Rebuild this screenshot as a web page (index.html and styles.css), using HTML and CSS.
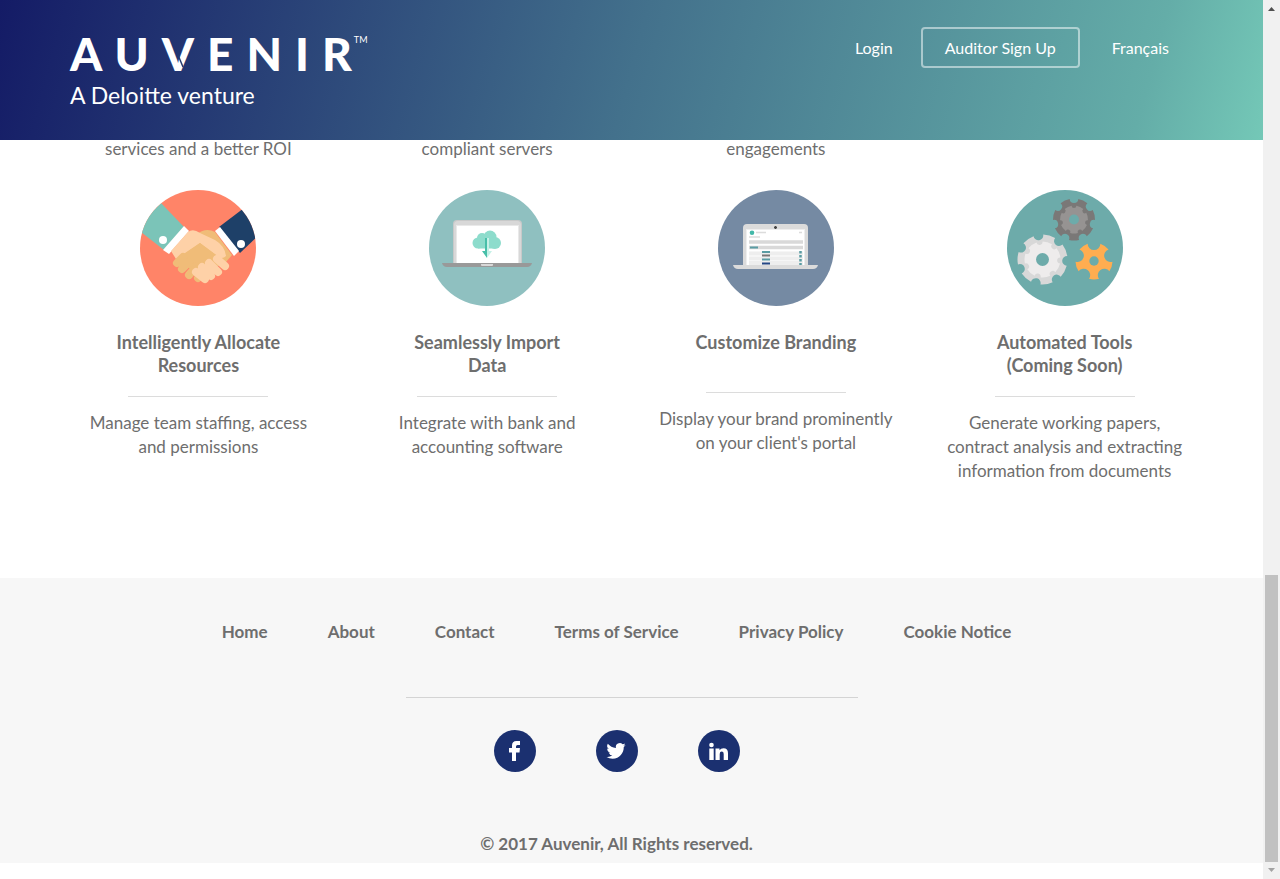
FILE: index.html
```html
<!DOCTYPE html>
<html lang="en">
<head>
<meta charset="utf-8">
<title>Auvenir</title>
<link rel="stylesheet" href="styles.css">
</head>
<body>
<div class="page">
  <header class="header">
    <a class="brand" href="#">
      <span class="wordmark"><span class="letters">AUVENI<span class="last">R</span></span><sup class="tm">TM</sup></span>
      <svg class="cuts" viewBox="0 0 140 54" aria-hidden="true"><path d="M108 28 113 40" stroke="#23396f" stroke-width="1.5"/></svg>
      <span class="tagline">A Deloitte venture</span>
    </a>
    <nav class="account">
      <a class="account-link" href="#">Login</a>
      <button class="signup" type="button">Auditor Sign Up</button>
      <a class="account-link" href="#">Français</a>
    </nav>
  </header>

  <main class="features">
    <p class="text">services and a better ROI</p>
    <p class="text">compliant servers</p>
    <p class="text">engagements</p>
    <p class="text"></p>

    <article class="feature">
      <svg class="art" viewBox="0 0 116 116" aria-hidden="true">
        <defs><clipPath id="disc"><circle cx="58" cy="58" r="58"/></clipPath></defs>
        <g clip-path="url(#disc)">
          <rect width="116" height="116" fill="#ff8468"/>
          <path d="M-4 38 21 13 44 37 24 60Z" fill="#7bc4b8"/>
          <path d="M79 37 104 18 122 42 100 63Z" fill="#1e4068"/>
          <path d="M44 36 49 41 29 64 23 60Z" fill="#fff"/>
          <path d="M75 41 80 37 99 61 94 66Z" fill="#fff"/>
          <circle cx="23" cy="50" r="4" fill="#fff"/><circle cx="101" cy="54" r="4" fill="#fff"/>
          <path d="M57 44Q66 37 75 42L92 65 86 72 62 84 40 68Z" fill="#f0bc78"/>
          <path d="M48 42Q53 38 60 43L75 50Q85 56 86 66 82 70 77 66L60 53 36 69 31 61Z" fill="#fed1a7"/>
          <path d="M60 53 79 67 60 86 37 69Z" fill="#f0bc78"/>
          <g stroke="#f0bc78" stroke-width="8" stroke-linecap="round"><path d="M37 73 43 67M42 79 49 72M49 85 56 77M58 88 64 81"/></g>
          <g stroke="#fed1a7" stroke-width="8" stroke-linecap="round"><path d="M77 69 85 76M69 73 78 82M62 77 71 86M56 82 65 89"/></g>
        </g>
      </svg>
      <h2 class="title">Intelligently Allocate Resources</h2>
      <hr class="rule">
      <p class="text">Manage team staffing, access and permissions</p>
    </article>

    <article class="feature">
      <svg class="art" viewBox="0 0 116 116" aria-hidden="true">
        <circle cx="58" cy="58" r="58" fill="#8fc0c0"/>
        <path d="M24 74V34q0-4 4-4h61q4 0 4 4v40z" fill="#c8c9c9"/>
        <path d="M25 74V35q0-4 4-4h59q4 0 4 4v39z" fill="#d8d8d8"/>
        <rect x="27" y="35" width="63" height="39" fill="#e9e9e9"/><rect x="28" y="36" width="61" height="38" fill="#fff"/>
        <g fill="#8ddccc"><circle cx="49" cy="53" r="5.5"/><circle cx="53" cy="48" r="5"/><circle cx="61" cy="47" r="6.5"/><circle cx="66" cy="53" r="6"/><rect x="49" y="49" width="17" height="9.5"/></g>
        <path d="M56 48h2v20l-5-7h3z" fill="#47bfa9"/><path d="M58 48h2v13h3l-5 7z" fill="#c5f1e7"/>
        <path d="M13 73h90q-1 4-5 4H18q-4 0-5-4z" fill="#999"/><path d="M52 74h12v1q0 1-1 1H53q-1 0-1-1z" fill="#d8d8d8"/>
      </svg>
      <h2 class="title">Seamlessly Import Data</h2>
      <hr class="rule">
      <p class="text">Integrate with bank and accounting software</p>
    </article>

    <article class="feature">
      <svg class="art" viewBox="0 0 116 116" aria-hidden="true">
        <circle cx="58" cy="58" r="58" fill="#758aa3"/>
        <path d="M25 75V38q0-4 4-4h57q4 0 4 4v37z" fill="#dbdbdb"/><path d="M28 75V39h59v36z" fill="#eee"/>
        <rect x="29" y="40" width="57" height="35" fill="#fff"/><path d="M56 37.500h3M57.500 36v3" stroke="#444" stroke-width="1.500"/>
        <circle cx="34" cy="42.700" r="2.300" fill="#42b8a8"/><path d="M38 42.500h10M31 47h11M81 42.500h3" stroke="#dcdcdc" stroke-width="1.500"/>
        <path d="M31 52h54M31 57.500h54" stroke="#d9d9d9" stroke-width="3.500"/><path d="M31 63.500h54M31 68.500h54M31 73h54" stroke="#eee" stroke-width="4"/>
        <path d="M32 57.500h8M44 62h8M44 69.500h8" stroke="#5a9ca3" stroke-width="2"/><path d="M44 65.500h8" stroke="#777" stroke-width="2"/><path d="M44 73.500h8" stroke="#244785" stroke-width="2"/>
        <path d="M82.500 61v14" stroke="#5a9ca3" stroke-width="2.500" stroke-dasharray="2.500 1.500"/>
        <path d="M15 75h85q-1 4-5 4H20q-4 0-5-4z" fill="#dbdbdb"/>
      </svg>
      <h2 class="title">Customize Branding</h2>
      <hr class="rule">
      <p class="text">Display your brand prominently on your client's portal</p>
    </article>

    <article class="feature">
      <svg class="art" viewBox="0 0 116 116" aria-hidden="true">
        <circle cx="58" cy="58" r="58" fill="#6dabaa"/>
        <g id="gears"></g>
      </svg>
      <h2 class="title">Automated Tools (Coming Soon)</h2>
      <hr class="rule">
      <p class="text">Generate working papers, contract analysis and extracting information from documents</p>
    </article>
  </main>

  <footer class="footer">
    <nav class="links">
      <a href="#">Home</a><a href="#">About</a><a href="#">Contact</a><a href="#">Terms of Service</a><a href="#">Privacy Policy</a><a href="#">Cookie Notice</a>
    </nav>
    <hr class="footer-rule">
    <div class="social">
      <a href="#" aria-label="Facebook"><svg viewBox="0 0 42 42"><circle cx="21" cy="21" r="21" fill="#1b3070"/><path d="M18 31V22.500h-3V18h3v-2.500q0-4.500 4.500-4.500H26v4h-2.500q-1.500 0-1.500 1.500V18h4l-.5 4.500H22V31z" fill="#fff"/></svg></a>
      <a href="#" aria-label="Twitter"><svg viewBox="0 0 42 42"><circle cx="21" cy="21" r="21" fill="#1b3070"/><path transform="translate(10.500 11.300) scale(.8)" d="M23.950 4.570a10 10 0 0 1-2.820.77 4.960 4.960 0 0 0 2.160-2.720c-.95.560-2 .96-3.130 1.180a4.920 4.920 0 0 0-8.380 4.480C7.690 8.100 4.070 6.130 1.640 3.160a4.920 4.920 0 0 0 1.520 6.570 4.900 4.900 0 0 1-2.230-.61v.06a4.920 4.920 0 0 0 3.950 4.830 5 5 0 0 1-2.210.08 4.940 4.940 0 0 0 4.600 3.420A9.870 9.870 0 0 1 0 19.540a14 14 0 0 0 7.550 2.210c9.050 0 14-7.500 14-13.980 0-.21 0-.42-.02-.63a9.940 9.940 0 0 0 2.420-2.570z" fill="#fff"/></svg></a>
      <a href="#" aria-label="LinkedIn"><svg viewBox="0 0 42 42"><circle cx="21" cy="21" r="21" fill="#1b3070"/><circle cx="13.500" cy="15" r="2.300" fill="#fff"/><path d="M11.300 18.500h4.400V30h-4.400zM17.500 18.500h4v1.700q1.300-2 4-2 4.500 0 4.500 5V30h-4.300v-6q0-2.400-2-2.400t-2 2.400v6h-4.200z" fill="#fff"/></svg></a>
    </div>
    <p class="copyright">© 2017 Auvenir, All Rights reserved.</p>
  </footer>
</div>
<div class="scrollbar" aria-hidden="true">
  <svg class="arrow" viewBox="0 0 17 17"><path d="M5 11h7L8.500 7z" fill="#505050"/></svg>
  <div class="track"><div class="thumb"></div></div>
  <svg class="arrow" viewBox="0 0 17 17"><path d="M5 6h7l-3.500 4z" fill="#a3a3a3"/></svg>
</div>
<script src="gears.js"></script>
</body>
</html>
```
FILE: gears.js
```js
const host = document.getElementById('gears');

// Builds a gear outline: arc-topped teeth with round notches between them.
// "share" is the part of each step that the tooth takes.
function gear(cx, cy, outer, teeth, share, turn, fill) {
  let d = '';
  const step = 2 * Math.PI / teeth;
  const half = step * share / 2;
  const notch = outer * Math.sin((step - 2 * half) / 2);
  const at = (a) => (cx + outer * Math.cos(a)).toFixed(2) + ' ' + (cy + outer * Math.sin(a)).toFixed(2);
  for (let i = 0; i < teeth; i++) {
    const a = turn * Math.PI / 180 + i * step;
    d += (i ? '' : 'M' + at(a - half));
    d += 'A' + outer + ' ' + outer + ' 0 0 1 ' + at(a + half);
    d += 'A' + notch + ' ' + notch + ' 0 0 0 ' + at(a + step - half);
  }
  const path = document.createElementNS('http://www.w3.org/2000/svg', 'path');
  path.setAttribute('d', d + 'Z');
  path.setAttribute('fill', fill);
  host.appendChild(path);
}

function disc(cx, cy, r, fill) {
  const c = document.createElementNS('http://www.w3.org/2000/svg', 'circle');
  c.setAttribute('cx', cx);
  c.setAttribute('cy', cy);
  c.setAttribute('r', r);
  c.setAttribute('fill', fill);
  host.appendChild(c);
}

gear(67, 29.5, 21, 7, 0.54, 90, '#7a7877');
gear(67, 29.5, 14, 7, 0.62, 90, '#969392');
disc(67, 29.5, 5, '#6dabaa');
gear(35.5, 69.5, 25, 7, 0.56, -74, '#d8d8d8');
gear(35.5, 69.5, 18, 7, 0.62, -74, '#eeecec');
disc(35.5, 69.5, 6.5, '#6dabaa');
gear(87, 71, 18.5, 5, 0.44, 90, '#ffad50');
disc(87, 71, 4.7, '#6dabaa');
```
FILE: styles.css
```css
* { box-sizing: border-box; }
body {
  margin: 0;
  min-height: 100vh;
  display: flex;
  font-family: Lato, "Open Sans", sans-serif;
  font-size: 16px;
  color: #6e6e6e;
  background: #fff;
}
p, h2 { margin: 0; }
a { color: inherit; text-decoration: none; }
hr { border: 0; margin: 0; height: 1px; }
.page { flex: 1; }

.header {
  position: relative;
  z-index: 1;
  min-height: 140px;
  padding: 27px 94px 0 70px;
  display: flex;
  justify-content: space-between;
  align-items: flex-start;
  color: #fff;
  background: linear-gradient(105deg, #141b66, #43718c 50%, #64ada8 90%, #74c8b7);
}
.brand { position: relative; display: flex; flex-direction: column; }
.wordmark { display: flex; }
.letters { font-size: 46px; line-height: 54px; font-weight: 900; letter-spacing: 13px; }
.last { letter-spacing: 2px; }
.tm { font-size: 9px; line-height: 26px; }
.cuts { position: absolute; top: 0; left: 0; width: 140px; height: 54px; }
.tagline { font-size: 23px; line-height: 28px; }
.account { display: flex; align-items: center; }
.signup {
  height: 41px;
  margin: 0 32px 0 28px;
  padding: 0 22px;
  border: 2px solid rgba(255, 255, 255, .5);
  border-radius: 4px;
  background: transparent;
  color: inherit;
  font: inherit;
}

.features {
  max-width: 1155px;
  margin: -3px auto 0;
  padding-bottom: 95px;
  display: grid;
  grid-template-columns: repeat(4, 1fr);
  row-gap: 29px;
  text-align: center;
}
.text { padding: 0 24px; font-size: 17px; line-height: 24px; }
.feature { display: flex; flex-direction: column; align-items: center; }
.art { width: 116px; height: 116px; }
.title {
  max-width: 180px;
  min-height: 42px;
  margin: 25px 0 19px;
  font-size: 18px;
  line-height: 23px;
  font-weight: 700;
}
.rule { width: 140px; margin-bottom: 14px; background: #dcdcdc; }

.footer {
  padding: 42px 0 7px;
  display: flex;
  flex-direction: column;
  align-items: center;
  background: #f7f7f7;
  font-size: 17px;
  font-weight: 700;
}
.links, .social { display: flex; gap: 60px; padding-right: 30px; }
.links { line-height: 24px; }
.footer-rule { width: 452px; margin: 53px 0 32px; background: #d4d4d4; }
.social svg { display: block; width: 42px; height: 42px; }
.copyright { margin-top: 60px; padding-right: 30px; line-height: 24px; }

.scrollbar { width: 17px; display: flex; flex-direction: column; background: #f1f1f1; }
.arrow { width: 17px; height: 17px; }
.track { flex: 1; display: flex; align-items: flex-end; padding: 0 2px; }
.thumb { width: 100%; height: 34%; background: #c1c1c1; }
```
